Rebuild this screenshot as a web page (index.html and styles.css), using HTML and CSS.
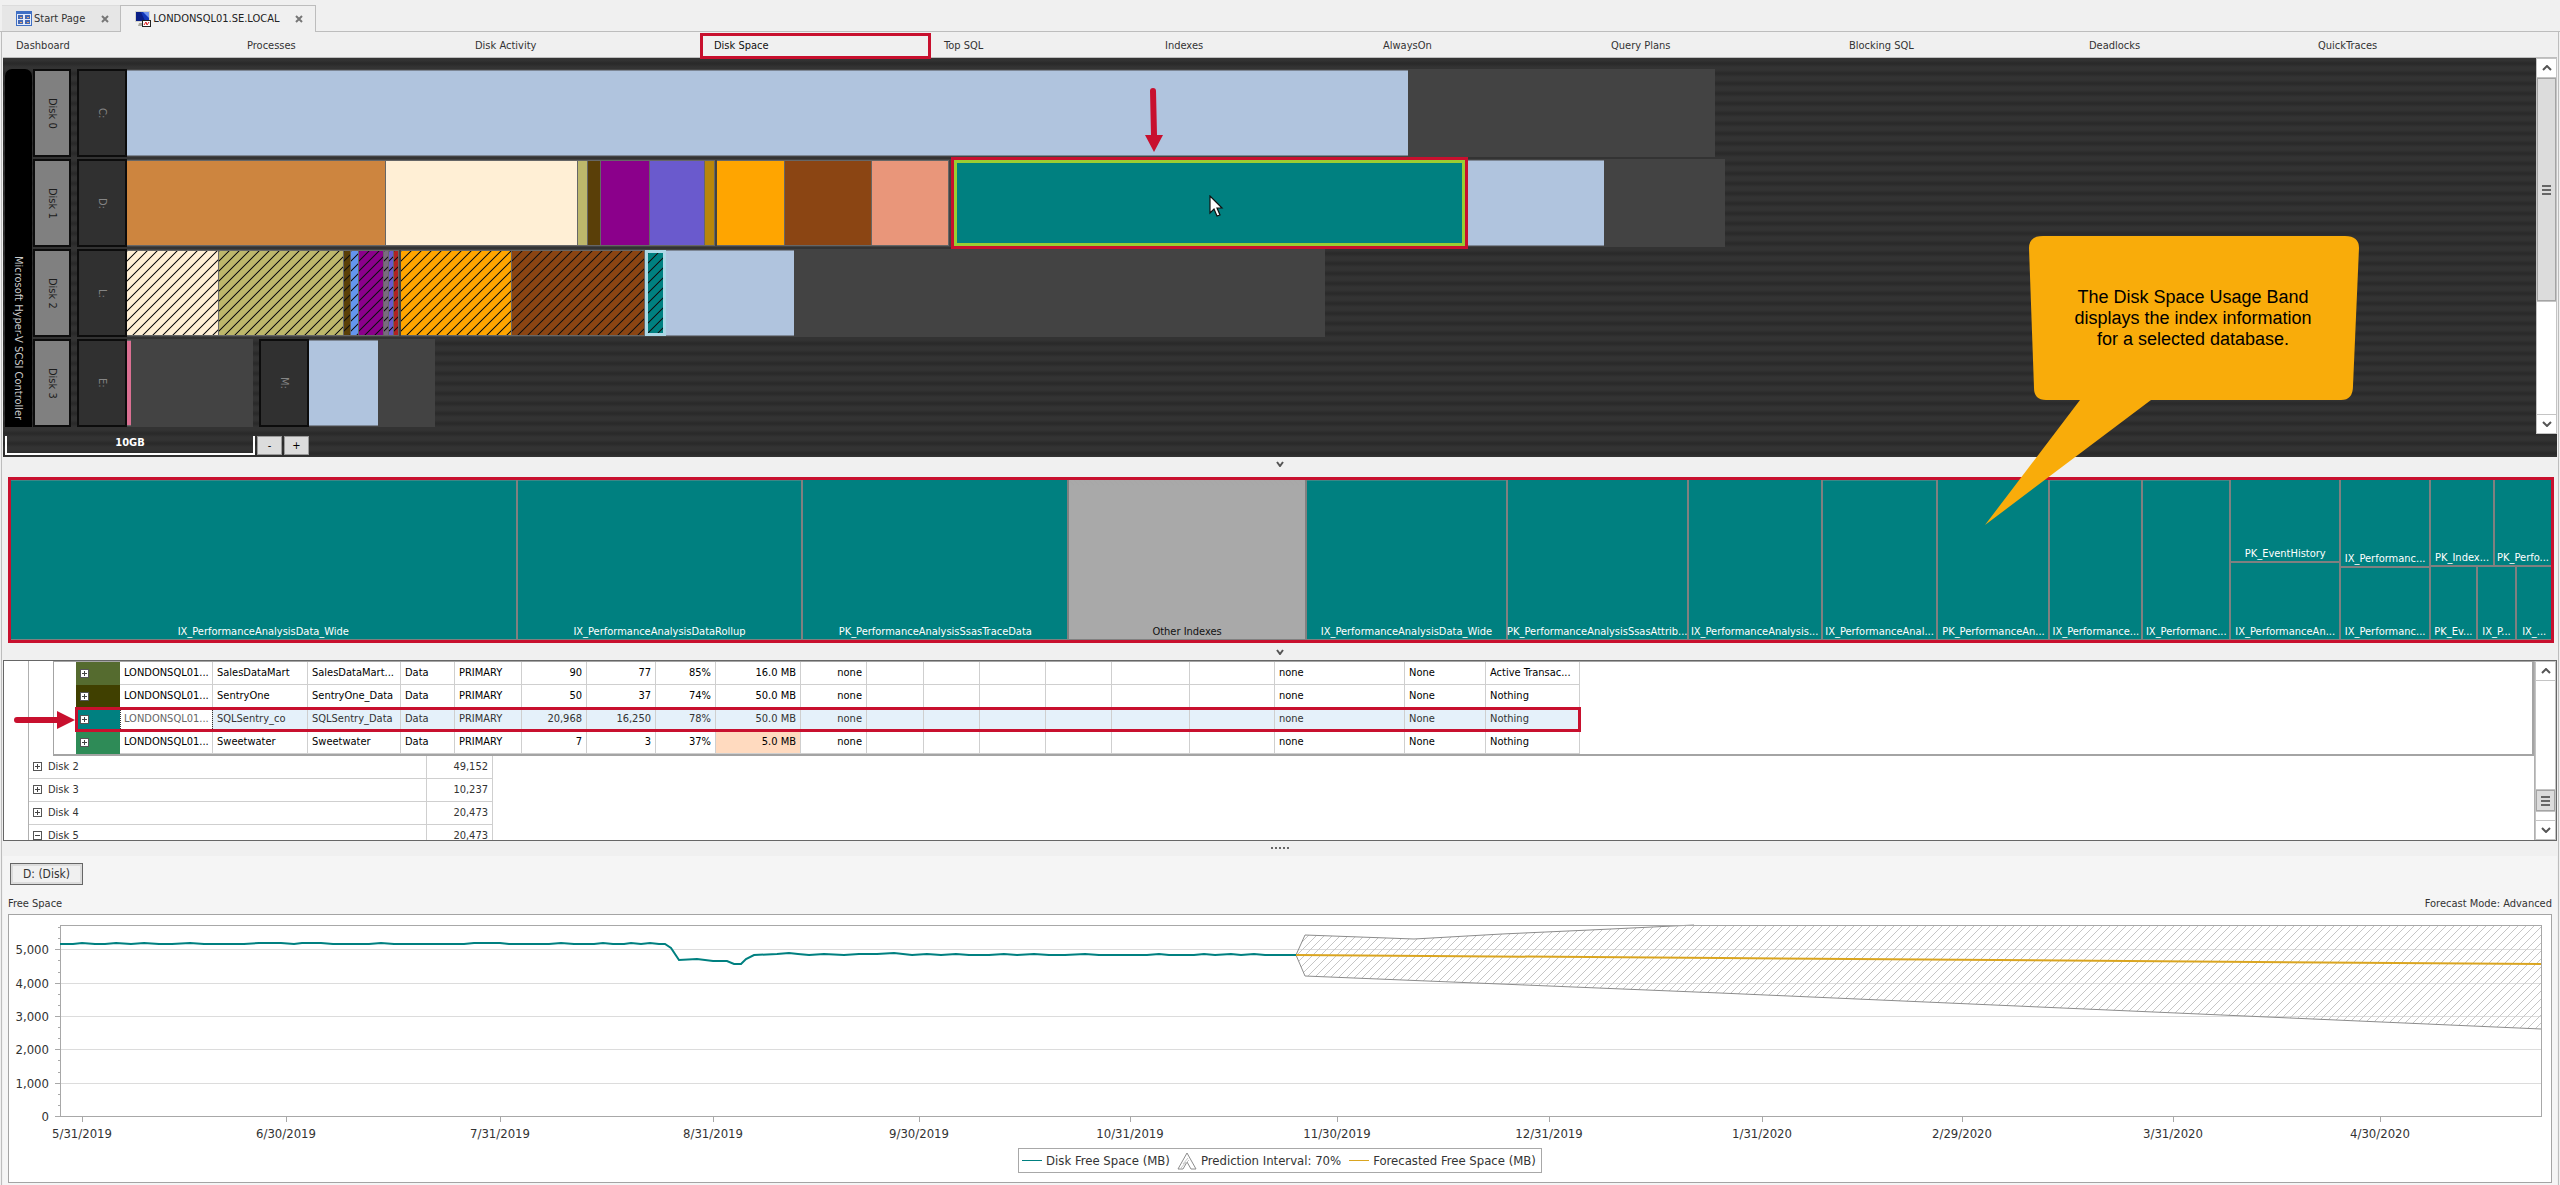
FILE: index.html
```html
<!DOCTYPE html>
<html lang="en">
<head>
<meta charset="utf-8">
<title>LONDONSQL01.SE.LOCAL - Disk Space</title>
<link rel="stylesheet" href="styles.css">
</head>
<body>
<header class="tabs">
  <div class="tab">
    <svg class="tab-icon" viewBox="0 0 16 16" aria-hidden="true"><rect width="16" height="15" fill="#3f6fc4"/><rect x="1" y="3" width="14" height="11" fill="#e4ebf8"/><g fill="#4468b4"><rect x="2" y="4" width="5" height="4"/><rect x="9" y="4" width="5" height="4"/><rect x="2" y="9" width="5" height="4"/><rect x="9" y="9" width="5" height="4"/></g><g fill="#e8a86a"><rect x="4" y="6" width="2" height="1"/><rect x="11" y="6" width="2" height="1"/><rect x="4" y="11" width="2" height="1"/><rect x="11" y="11" width="2" height="1"/></g></svg>
    <a class="tab-label" href="#start">Start Page</a>
    <button class="tab-close" aria-label="Close Start Page"><svg viewBox="0 0 8 8"><path d="M1 1L7 7M7 1L1 7"/></svg></button>
  </div>
  <div class="tab tab-active">
    <svg class="tab-icon" viewBox="0 0 16 16" aria-hidden="true"><path d="M0 0h15v11H0z" fill="#d4d4cc"/><path d="M1 1h13v9H1z" fill="#1237b8"/><path d="M1 1h5l4 9H1z" fill="#0a1f86"/><path d="M8 1h6v6z" fill="#6f93f0"/><path d="M4 12h5v3H3z" fill="#a8a8a0"/><rect x="7" y="9" width="9" height="7" fill="#222"/><rect x="8" y="10" width="7" height="5" fill="#fff"/><path d="M9 14l2-3 1 3 2-3" fill="none" stroke="#d22"/></svg>
    <a class="tab-label" href="#server">LONDONSQL01.SE.LOCAL</a>
    <button class="tab-close" aria-label="Close LONDONSQL01.SE.LOCAL"><svg viewBox="0 0 8 8"><path d="M1 1L7 7M7 1L1 7"/></svg></button>
  </div>
</header>

<main class="workspace">
  <nav class="views">
    <a href="#dashboard">Dashboard</a>
    <a href="#processes">Processes</a>
    <a href="#activity">Disk Activity</a>
    <a href="#space" class="current">Disk Space</a>
    <a href="#top">Top SQL</a>
    <a href="#indexes">Indexes</a>
    <a href="#alwayson">AlwaysOn</a>
    <a href="#plans">Query Plans</a>
    <a href="#blocking">Blocking SQL</a>
    <a href="#deadlocks">Deadlocks</a>
    <a href="#traces">QuickTraces</a>
  </nav>

  <section class="disk-map">
    <div class="map-body">
      <div class="controller">
        <div class="controller-name">Microsoft Hyper-V SCSI Controller</div>
        <div class="disks">
          <div class="disk">
            <div class="disk-name">Disk 0</div>
            <div class="volume">
              <div class="drive">C:</div>
              <div class="bar" style="width:1588px"><i class="free" style="width:1281px"></i></div>
            </div>
          </div>
          <div class="disk">
            <div class="disk-name">Disk 1</div>
            <div class="volume">
              <div class="drive">D:</div>
              <div class="bar" style="width:1598px"><i class="seg peru" style="width:259px"></i><i class="seg papaya" style="width:192px"></i><i class="seg khaki" style="width:10px"></i><i class="seg umber" style="width:13px"></i><i class="seg magenta" style="width:49px"></i><i class="seg slate" style="width:55px"></i><i class="seg gold" style="width:10px"></i><i class="gap" style="width:2px"></i><i class="seg orange" style="width:68px"></i><i class="seg sienna" style="width:87px"></i><i class="seg salmon" style="width:77px"></i><i class="gap" style="width:5px"></i><i class="seg teal selected" style="width:511px"></i><i class="free" style="width:139px"></i></div>
            </div>
          </div>
          <div class="disk">
            <div class="disk-name">Disk 2</div>
            <div class="volume">
              <div class="drive">L:</div>
              <div class="bar" style="width:1198px"><i class="seg papaya log" style="width:92px"></i><i class="seg khaki log" style="width:125px"></i><i class="seg umber log" style="width:7px"></i><i class="seg cornflower log" style="width:8px"></i><i class="seg magenta log" style="width:25px"></i><i class="seg dim log" style="width:5px"></i><i class="seg slate log" style="width:5px"></i><i class="seg brick log" style="width:5px"></i><i class="gap" style="width:2px"></i><i class="seg orange log" style="width:111px"></i><i class="seg sienna log" style="width:133px"></i><i class="seg teal log related" style="width:21px"></i><i class="free" style="width:128px"></i></div>
            </div>
          </div>
          <div class="disk">
            <div class="disk-name">Disk 3</div>
            <div class="volume">
              <div class="drive">E:</div>
              <div class="bar" style="width:126px"><i class="seg pink" style="width:4px"></i></div>
            </div>
            <div class="volume">
              <div class="drive">M:</div>
              <div class="bar" style="width:126px"><i class="free" style="width:69px"></i></div>
            </div>
          </div>
        </div>
      </div>
      <div class="scrollbar map-scroll">
        <button aria-label="Scroll map up"><svg viewBox="0 0 10 6"><path d="M1 5L5 1L9 5"/></svg></button>
        <div class="thumb"><b></b><b></b><b></b></div>
        <div class="track"></div>
        <button aria-label="Scroll map down"><svg viewBox="0 0 10 6"><path d="M1 1L5 5L9 1"/></svg></button>
      </div>
    </div>
    <div class="scale">
      <div class="scale-ruler">10GB</div>
      <button aria-label="Zoom out">-</button>
      <button aria-label="Zoom in">+</button>
    </div>

    <svg class="arrow-down" viewBox="0 0 18 64" aria-hidden="true"><path d="M5 3Q5 0 8 0T11 3L12 47H18L9 64L0 47H6Z" fill="#c8102e"/></svg>
    <svg class="pointer" viewBox="0 0 16 24" aria-hidden="true"><path d="M1 1V18L5 14L8 21L11 20L8 13H13Z" fill="#fff" stroke="#111" stroke-width="1.2"/></svg>
    <div class="callout">
      <svg viewBox="0 0 374 289" aria-hidden="true"><path d="M58 0H360Q374 0 374 12L368 150Q368 164 356 164H166L0 289L95 164H61Q49 164 49 152L44 12Q44 0 58 0Z" fill="#f9ac0a"/></svg>
      <p>The Disk Space Usage Band<br>displays the index information<br>for a selected database.</p>
    </div>
  </section>

  <div class="splitter"><svg viewBox="0 0 8 6"><path d="M1 1L4 5L7 1"/></svg></div>

  <section class="band">
    <div class="idx used" style="flex-grow:505">IX_PerformanceAnalysisData_Wide</div>
    <div class="idx used" style="flex-grow:284">IX_PerformanceAnalysisDataRollup</div>
    <div class="idx" style="flex-grow:264">PK_PerformanceAnalysisSsasTraceData</div>
    <div class="idx other" style="flex-grow:236">Other Indexes</div>
    <div class="idx used" style="flex-grow:199">IX_PerformanceAnalysisData_Wide</div>
    <div class="idx" style="flex-grow:179">PK_PerformanceAnalysisSsasAttrib...</div>
    <div class="idx" style="flex-grow:132">IX_PerformanceAnalysis...</div>
    <div class="idx used" style="flex-grow:114">IX_PerformanceAnal...</div>
    <div class="idx" style="flex-grow:110">PK_PerformanceAn...</div>
    <div class="idx used" style="flex-grow:91">IX_Performance...</div>
    <div class="idx used" style="flex-grow:86">IX_Performanc...</div>
    <div class="stack" style="flex-grow:108">
      <div class="idx" style="flex-grow:80">PK_EventHistory</div>
      <div class="idx" style="flex-grow:76">IX_PerformanceAn...</div>
    </div>
    <div class="stack" style="flex-grow:88">
      <div class="idx" style="flex-grow:86">IX_Performanc...</div>
      <div class="idx" style="flex-grow:71">IX_Performanc...</div>
    </div>
    <div class="stack" style="flex-grow:120">
      <div class="line" style="flex-grow:85">
        <div class="idx" style="flex-grow:62">PK_Index...</div>
        <div class="idx" style="flex-grow:56">PK_Perfo...</div>
      </div>
      <div class="line" style="flex-grow:72">
        <div class="idx" style="flex-grow:45">PK_Ev...</div>
        <div class="idx" style="flex-grow:38">IX_P...</div>
        <div class="idx" style="flex-grow:34">IX_...</div>
      </div>
    </div>
  </section>

  <div class="splitter splitter-low"><svg viewBox="0 0 8 6"><path d="M1 1L4 5L7 1"/></svg></div>

  <section class="files">
    <div class="files-view">
      <div class="tree">
        <div class="detail">
          <table class="file-table">
            <colgroup><col style="width:44px"><col style="width:93px"><col style="width:95px"><col style="width:93px"><col style="width:54px"><col style="width:67px"><col style="width:65px"><col style="width:69px"><col style="width:60px"><col style="width:85px"><col style="width:66px"><col style="width:57px"><col style="width:56px"><col style="width:66px"><col style="width:66px"><col style="width:78px"><col style="width:85px"><col style="width:130px"><col style="width:81px"><col style="width:94px"></colgroup>
            <tbody>
              <tr><td class="key olive"><button class="expand" aria-label="Expand"></button></td><td>LONDONSQL01...</td><td>SalesDataMart</td><td>SalesDataMart...</td><td>Data</td><td>PRIMARY</td><td class="num">90</td><td class="num">77</td><td class="num">85%</td><td class="num">16.0 MB</td><td class="num">none</td><td></td><td></td><td></td><td></td><td></td><td></td><td>none</td><td>None</td><td>Active Transac...</td></tr>
              <tr><td class="key moss"><button class="expand" aria-label="Expand"></button></td><td>LONDONSQL01...</td><td>SentryOne</td><td>SentryOne_Data</td><td>Data</td><td>PRIMARY</td><td class="num">50</td><td class="num">37</td><td class="num">74%</td><td class="num">50.0 MB</td><td class="num">none</td><td></td><td></td><td></td><td></td><td></td><td></td><td>none</td><td>None</td><td>Nothing</td></tr>
              <tr class="picked"><td class="key teal"><button class="expand" aria-label="Expand"></button></td><td class="focused">LONDONSQL01...</td><td>SQLSentry_co</td><td>SQLSentry_Data</td><td>Data</td><td>PRIMARY</td><td class="num">20,968</td><td class="num">16,250</td><td class="num">78%</td><td class="num">50.0 MB</td><td class="num">none</td><td></td><td></td><td></td><td></td><td></td><td></td><td>none</td><td>None</td><td>Nothing</td></tr>
              <tr><td class="key green"><button class="expand" aria-label="Expand"></button></td><td>LONDONSQL01...</td><td>Sweetwater</td><td>Sweetwater</td><td>Data</td><td>PRIMARY</td><td class="num">7</td><td class="num">3</td><td class="num">37%</td><td class="num warn">5.0 MB</td><td class="num">none</td><td></td><td></td><td></td><td></td><td></td><td></td><td>none</td><td>None</td><td>Nothing</td></tr>
            </tbody>
          </table>
        </div>
        <table class="disk-table">
          <tbody>
            <tr><td><button class="expand" aria-label="Expand Disk 2"></button>Disk 2</td><td class="num">49,152</td></tr>
            <tr><td><button class="expand" aria-label="Expand Disk 3"></button>Disk 3</td><td class="num">10,237</td></tr>
            <tr><td><button class="expand" aria-label="Expand Disk 4"></button>Disk 4</td><td class="num">20,473</td></tr>
            <tr><td><button class="expand open" aria-label="Collapse Disk 5"></button>Disk 5</td><td class="num">20,473</td></tr>
          </tbody>
        </table>
      </div>
      <div class="scrollbar files-scroll">
        <button aria-label="Scroll files up"><svg viewBox="0 0 10 6"><path d="M1 5L5 1L9 5"/></svg></button>
        <div class="track"></div>
        <div class="thumb"><b></b><b></b><b></b></div>
        <div class="track track-end"></div>
        <button aria-label="Scroll files down"><svg viewBox="0 0 10 6"><path d="M1 1L5 5L9 1"/></svg></button>
      </div>
    </div>
    <svg class="arrow-right" viewBox="0 0 61 18" aria-hidden="true"><path d="M3 6Q0 6 0 9T3 12H43V18L61 9L43 0V6Z" fill="#c8102e"/></svg>
  </section>

  <div class="grip"><b></b><b></b><b></b><b></b><b></b></div>

  <section class="forecast">
    <button class="drive-button">D: (Disk)</button>
    <div class="captions"><span>Free Space</span><span>Forecast Mode: Advanced</span></div>
    <div class="chart">
      <svg class="plot" viewBox="0 0 2542 232">
        <defs><pattern id="hatch" width="8" height="8" patternUnits="userSpaceOnUse"><path d="M-1 9L9 -1M-1 1L1 -1M7 9L9 7" stroke="#c6c6c6" stroke-width="1"/></pattern></defs>
        <g stroke="#dcdcdc" shape-rendering="crispEdges"><path d="M51 34H2532M51 68H2532M51 101H2532M51 134H2532M51 168H2532"/></g>
        <path d="M1287 40L1296 20L1405 24L1493 19L1581 15L1685 10H2532V114L1711 78L1296 61Z" fill="url(#hatch)"/>
        <path d="M1685 10L1581 15L1493 19L1405 24L1296 20L1287 40L1296 61L1711 78L2532 114" fill="none" stroke="#8c8c8c"/>
        <g fill="none" stroke="#a8a8a8" shape-rendering="crispEdges"><path d="M51 10H2532V201H51Z"/><path d="M46 34h5M46 68h5M46 101h5M46 134h5M46 168h5M46 201h5M49 12h2M49 23h2M49 45h2M49 57h2M49 79h2M49 90h2M49 112h2M49 123h2M49 145h2M49 157h2M49 179h2M49 190h2"/><path d="M73 201v6M277 201v6M491 201v6M704 201v6M910 201v6M1121 201v6M1328 201v6M1540 201v6M1753 201v6M1953 201v6M2164 201v6M2371 201v6"/></g>
        <polyline fill="none" stroke="#008080" stroke-width="2" points="51,29 64,29 73,28 86,29 96,29 107,28 122,29 135,28 150,29 163,29 181,28 195,29 210,29 220,29 235,29 250,28 272,28 285,29 293,28 312,28 324,29 340,29 360,29 372,28 385,29 402,29 420,29 430,29 455,29 465,28 491,28 500,29 520,29 540,29 552,28 565,29 585,29 594,28 604,29 615,29 622,28 632,29 641,28 650,29 656,29 662,33 670,45 688,44 704,46 718,46 725,49 732,49 737,44 745,40 768,39 780,38 789,39 800,40 815,39 835,40 850,39 868,39 885,38 903,40 918,39 932,40 947,39 960,40 980,40 995,39 1008,40 1025,39 1040,40 1056,40 1076,39 1090,40 1110,40 1124,40 1138,40 1150,39 1160,40 1185,40 1195,39 1206,40 1222,39 1232,40 1245,39 1256,40 1270,40 1287,40"/>
        <path d="M1287 40L1711 43L2532 49" fill="none" stroke="#daa520" stroke-width="2"/>
        <g class="axis-y"><text x="40" y="39">5,000</text><text x="40" y="73">4,000</text><text x="40" y="106">3,000</text><text x="40" y="139">2,000</text><text x="40" y="173">1,000</text><text x="40" y="206">0</text></g>
        <g class="axis-x"><text x="73" y="223">5/31/2019</text><text x="277" y="223">6/30/2019</text><text x="491" y="223">7/31/2019</text><text x="704" y="223">8/31/2019</text><text x="910" y="223">9/30/2019</text><text x="1121" y="223">10/31/2019</text><text x="1328" y="223">11/30/2019</text><text x="1540" y="223">12/31/2019</text><text x="1753" y="223">1/31/2020</text><text x="1953" y="223">2/29/2020</text><text x="2164" y="223">3/31/2020</text><text x="2371" y="223">4/30/2020</text></g>
      </svg>
      <div class="legend">
        <span class="key-line free-line"></span><span>Disk Free Space (MB)</span>
        <svg viewBox="0 0 20 18" aria-hidden="true"><path d="M10 1L19 17H14L10 10L6 17H1Z" fill="none" stroke="#8c8c8c"/><path d="M6 12l5-6M8 12l4-4M4 16l5-6" stroke="#c6c6c6"/></svg><span>Prediction Interval: 70%</span>
        <span class="key-line forecast-line"></span><span>Forecasted Free Space (MB)</span>
      </div>
    </div>
  </section>
</main>
</body>
</html>
```
FILE: styles.css
```css
* { box-sizing: border-box; }

body {
  margin: 0;
  background: #f0f0f0;
  color: #333;
  font: 11px/14px "DejaVu Sans Condensed", "Noto Sans", sans-serif;
}

a { color: inherit; text-decoration: none; }
button { font: inherit; color: inherit; padding: 0; border: 0; background: none; }

/* Document tabs */
.tabs {
  display: flex;
  height: 32px;
  padding: 5px 1px 0 2px;
  box-shadow: inset 0 -1px #bdbdbd;
}
.tab {
  display: flex;
  align-items: center;
  height: 26px;
  padding: 0 10px 0 14px;
  background: #e6e6e6;
  border-top: 1px solid #dcdcdc;
}
.tab-active {
  height: 27px;
  padding-right: 11px;
  background: #f0f0f0;
  border: 1px solid #bdbdbd;
  border-bottom: 0;
  color: #222;
}
.tab-icon { width: 16px; height: 16px; margin-right: 2px; }
.tab-close { width: 10px; height: 10px; margin-left: 15px; line-height: 0; }
.tab-close svg { width: 8px; height: 8px; fill: none; stroke: #777; stroke-width: 2; }

/* Workspace */
.workspace {
  margin: 0 1px;
  padding: 0 1px;
  border: solid #bdbdbd;
  border-width: 0 1px;
}
.views {
  display: grid;
  grid-template-columns: 231fr 228fr 238fr 231fr 221fr 218fr 228fr 238fr 240fr 229fr 252fr;
  height: 26px;
  border-bottom: 1px solid #bdbdbd;
}
.views a { padding: 0 13px; line-height: 28px; }
.views .current {
  position: relative;
  z-index: 1;
  height: 26px;
  margin: 1px 0 0;
  border: 3px solid #c8102e;
  padding: 0 11px;
  line-height: 20px;
  color: #111;
}

/* Disk map */
.disk-map {
  position: relative;
  padding-bottom: 2px;
  background: repeating-linear-gradient(#333 0 2px, #2a2a2a 5px, #2a2a2a 6px, #333 9px, #333 10px);
}
.map-body { display: flex; justify-content: space-between; }
.controller { display: flex; padding: 11px 0 7px 2px; gap: 1px; }
.controller-name {
  writing-mode: vertical-rl;
  display: flex;
  justify-content: flex-end;
  width: 27px;
  padding: 0 6px 7px 0;
  line-height: 16px;
  border-radius: 7px 7px 0 0;
  background: #000;
  color: #ccc;
}
.disks { display: flex; flex-direction: column; gap: 2px; }
.disk { display: flex; height: 88px; gap: 6px; }
.disk-name, .drive {
  writing-mode: vertical-rl;
  text-align: center;
  border: 2px solid #0c0c0c;
}
.disk-name { width: 38px; line-height: 34px; background: #808080; color: #1c1c1c; }
.volume { display: flex; }
.drive { width: 50px; line-height: 46px; background: #303030; color: #858585; }
.bar { display: flex; padding: 1px 0; background: #434343; }
.bar i { flex: none; }
.seg, .free { border: solid #666; border-width: 1px 0; }
.seg { border-right-width: 1px; }
.free { background: #b0c4de; border-color: #7d8795; }
.gap { background: #434343; }
.peru { background-color: #cd853f; }
.papaya { background-color: #ffefd5; }
.khaki { background-color: #bdb76b; }
.umber { background-color: #5a3f08; }
.magenta { background-color: #8b008b; }
.slate { background-color: #6a5acd; }
.gold { background-color: #b8860b; }
.orange { background-color: #ffa500; }
.sienna { background-color: #8b4513; }
.salmon { background-color: #e9967a; }
.teal { background-color: #008080; }
.cornflower { background-color: #6495ed; }
.brick { background-color: #b22222; }
.dim { background-color: #7a6a80; }
.pink { background-color: #db7093; border-right: 0; }
.log {
  background-image: linear-gradient(135deg, #111 0 2%, transparent 6% 44%, #111 48% 52%, transparent 56% 94%, #111 98%);
  background-size: 10px 10px;
}
.selected {
  position: relative;
  border: 3px solid #9acd32;
  outline: 3px solid #c8102e;
}
.related { border: 3px solid #add8e6; }

/* Scrollbars */
.scrollbar {
  display: flex;
  flex-direction: column;
  width: 21px;
  padding: 1px;
  gap: 1px;
  background: #c4c4c4;
}
.scrollbar button { flex: none; height: 18px; background: #fff; line-height: 0; }
.scrollbar button svg { width: 10px; height: 6px; fill: none; stroke: #555; stroke-width: 2; }
.thumb {
  display: flex;
  flex-direction: column;
  align-items: center;
  justify-content: center;
  gap: 2px;
  background: #dcdcdc;
  border: 1px solid #a4a4a4;
}
.thumb b { width: 9px; height: 2px; background: #666; }
.track { flex: 1; background: #fff; }
.map-scroll .thumb { height: 223px; }
.files-scroll .thumb { height: 21px; }
.files-scroll .track-end { flex: none; height: 8px; }

/* Scale and zoom */
.scale { display: flex; gap: 2px; padding: 2px 0 0 2px; }
.scale-ruler {
  width: 250px;
  height: 19px;
  border: 2px solid #fff;
  border-top: 0;
  line-height: 14px;
  text-align: center;
  font-weight: bold;
  color: #fff;
}
.scale button {
  width: 25px;
  height: 19px;
  background: #dcdcdc;
  border: 1px solid #999;
  color: #000;
}

/* Annotations over the map */
.arrow-down { position: absolute; left: 1142px; top: 30px; width: 18px; height: 64px; }
.pointer { position: absolute; left: 1206px; top: 137px; width: 16px; height: 24px; }
.callout { position: absolute; right: 198px; top: 178px; width: 374px; z-index: 2; }
.callout svg { display: block; width: 374px; height: 289px; }
.callout p {
  position: absolute;
  top: 51px;
  right: 0;
  width: 332px;
  margin: 0;
  font: 18px/21px "Liberation Sans", Arial, sans-serif;
  text-align: center;
  color: #000;
}

.splitter { height: 20px; padding-top: 4px; text-align: center; line-height: 0; }
.splitter-low { height: 17px; padding-top: 6px; }
.splitter svg { width: 8px; height: 6px; fill: none; stroke: #555; stroke-width: 2; }

/* Index usage band */
.band {
  display: flex;
  gap: 2px;
  height: 166px;
  margin: 0 3px 0 5px;
  padding-bottom: 1px;
  border: 3px solid #c8102e;
  background: #808080;
  color: #fff;
}
.idx {
  flex: 1 1 0;
  display: flex;
  align-items: end;
  justify-content: center;
  min-width: 0;
  min-height: 0;
  background: #008080;
  white-space: nowrap;
}
.stack, .line { flex: 1 1 0; display: flex; gap: 2px; min-width: 0; min-height: 0; }
.stack { flex-direction: column; }
.used { box-shadow: inset 0 1px #3c8787; }
.other {
  background: linear-gradient(45deg, #a9a9a9 45%, #999 50%, #a9a9a9 55%) 0 0 / 5px 6px repeat-x #a9a9a9;
  color: #111;
}

/* File grid */
.files { position: relative; }
.files-view {
  display: flex;
  height: 181px;
  overflow: hidden;
  border: 1px solid #666;
  background: #fff;
}
.tree { flex: 1; margin-left: 24px; border-left: 1px solid #b0b0b0; border-right: 1px solid #b0b0b0; }
.detail {
  margin-left: 24px;
  padding-left: 22px;
  border: solid #a4a4a4;
  border-width: 1px 2px 2px 1px;
}
table { border-collapse: separate; border-spacing: 0; table-layout: fixed; }
td {
  height: 23px;
  padding: 0 4px;
  overflow: hidden;
  white-space: nowrap;
  border: solid #cfcfcf;
  border-width: 0 1px 1px 0;
}
.num { text-align: right; }
.file-table { width: 1504px; color: #000; }
.file-table .key { border: 0; }
.olive { background-color: #556b2f; }
.moss { background-color: #404000; }
.green { background-color: #2e8b57; }
.warn { background: #ffdabf; }
.picked { background: #e5f1fa; color: #333; outline: 3px solid #c8102e; outline-offset: -2px; }
.picked .focused { background: #fff; color: #666; outline: 1px dotted #333; outline-offset: -1px; }
.disk-table { width: 464px; }
.disk-table td:last-child { width: 66px; }
.expand {
  display: inline-block;
  width: 9px;
  height: 9px;
  border: 1px solid #555;
  background:
    linear-gradient(#444, #444) center / 5px 1px no-repeat,
    linear-gradient(#444, #444) center / 1px 5px no-repeat, #fff;
}
.expand.open { background: linear-gradient(#444, #444) center / 5px 1px no-repeat, #fff; }
.disk-table .expand { margin-right: 6px; }
.arrow-right { position: absolute; left: 11px; top: 51px; width: 61px; height: 18px; }

.grip { display: flex; justify-content: center; gap: 2px; height: 15px; padding-top: 6px; }
.grip b { width: 2px; height: 2px; background: #666; }

/* Forecast */
.forecast { padding: 7px 5px 3px; background: #f5f5f5; }
.drive-button {
  display: block;
  width: 73px;
  height: 22px;
  margin-left: 2px;
  border: 1px solid #666;
  box-shadow: inset 0 0 0 2px #dcdcdc;
  background: #f0f0f0;
  font-size: 12px;
}
.captions { display: flex; justify-content: space-between; padding: 12px 0 3px; }
.chart { border: 1px solid #a4a4a4; background: #fff; }
.plot { display: block; width: 100%; font-size: 13px; fill: #333; }
.axis-y { text-anchor: end; }
.axis-x { text-anchor: middle; }
.legend {
  display: flex;
  align-items: center;
  width: max-content;
  height: 25px;
  margin: 1px auto 9px;
  padding: 0 5px 0 3px;
  border: 1px solid #a8a8a8;
  font-size: 13px;
}
.legend svg { width: 20px; height: 18px; margin: 0 4px 0 7px; }
.key-line { width: 20px; height: 1px; margin-right: 4px; }
.free-line { background: #008080; }
.forecast-line { margin-left: 8px; background: #daa520; }
```
